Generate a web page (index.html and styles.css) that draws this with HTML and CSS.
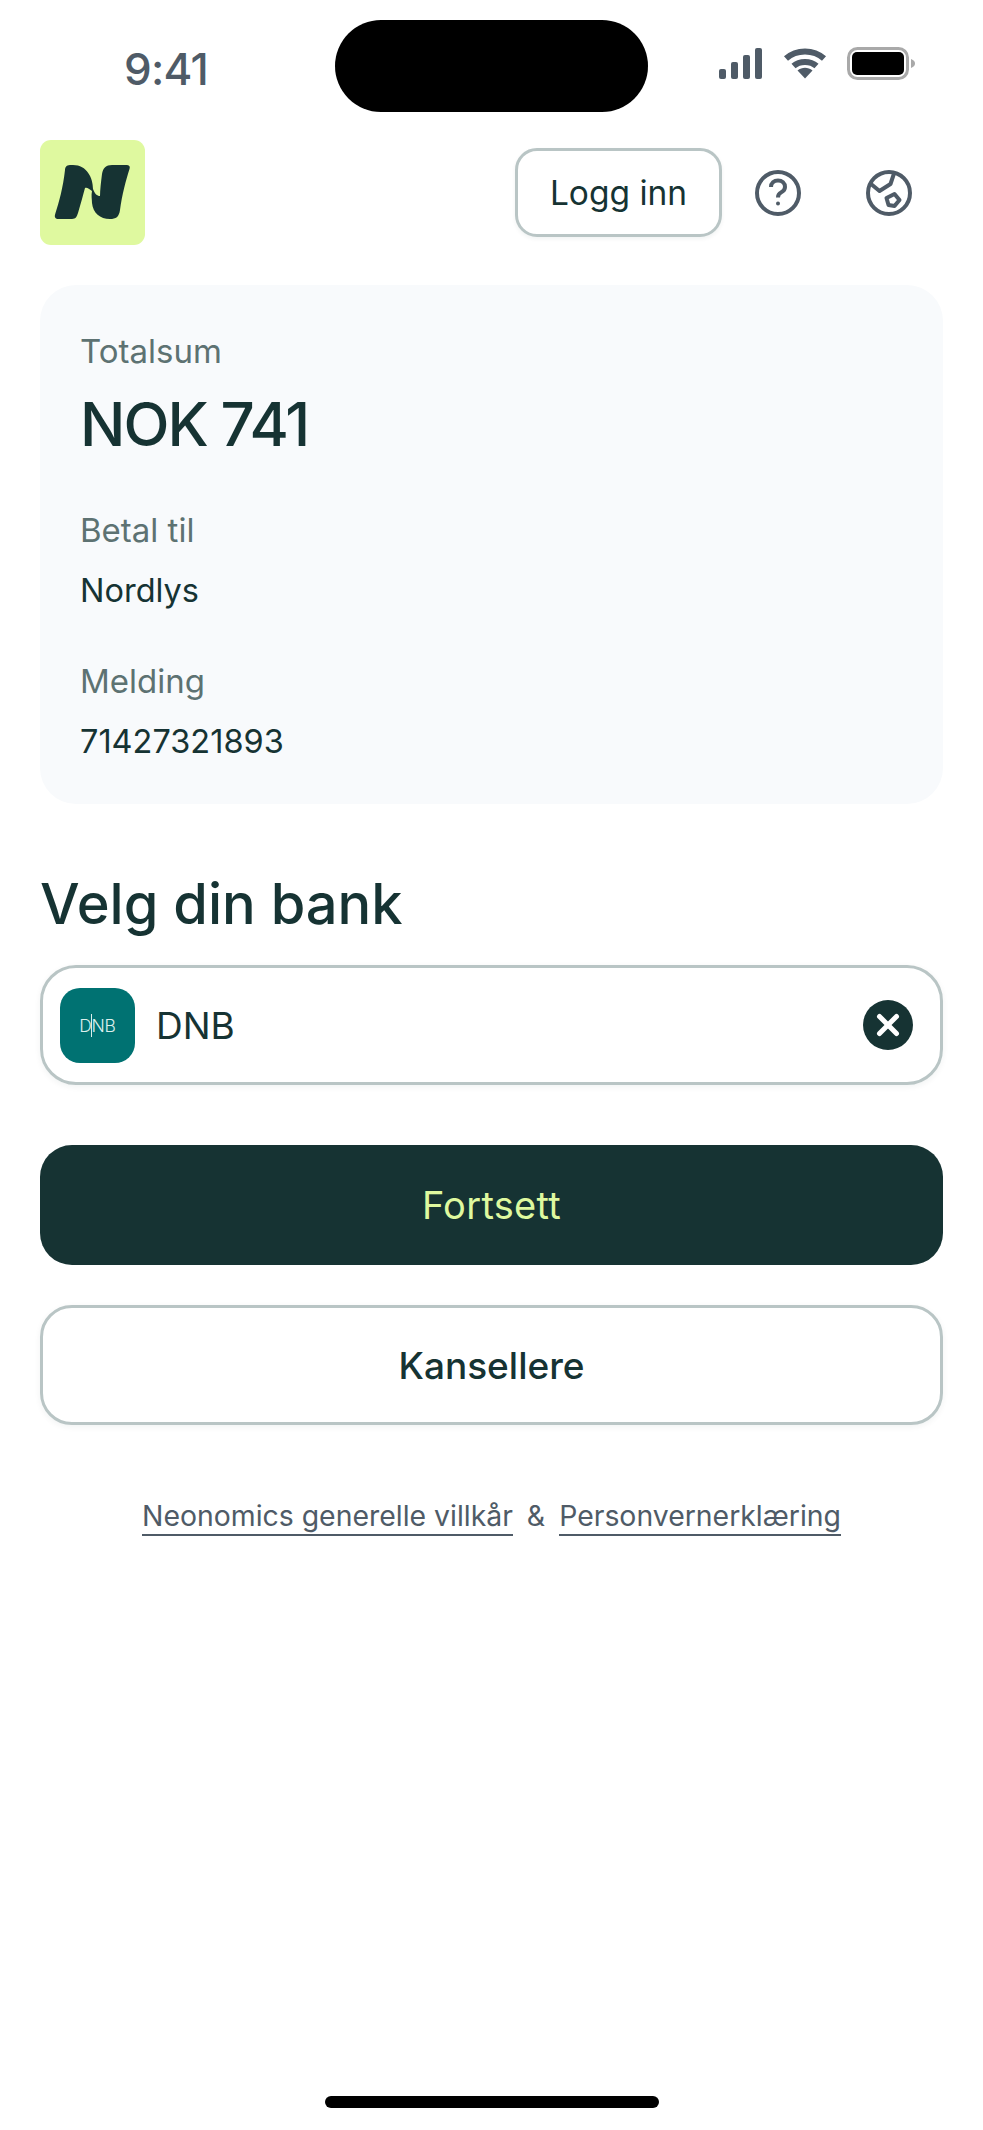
FILE: index.html

```html
<!DOCTYPE html>
<html lang="nb">
<head>
  <meta charset="UTF-8" />
  <title>Neonomics</title>
  <meta name="viewport" content="width=device-width, initial-scale=1.0" />
  <link rel="stylesheet" href="styles.css">
</head>
<body>
  <div class="status-bar">
    <div class="status-time">9:41</div>
    <div class="island"></div>
    <div class="status-icons">
      <svg class="signal" width="45" height="31" viewBox="0 0 45 31">
        <rect x="1" y="21" width="7" height="10" rx="2" />
        <rect x="13" y="14" width="7" height="17" rx="2" />
        <rect x="25" y="7" width="7" height="24" rx="2" />
        <rect x="37" y="0" width="7" height="31" rx="2" />
      </svg>
      <svg class="wifi" width="44" height="31" viewBox="0 0 44 31">
        <path d="M3 10.5C13.5 1 30.500 1 41 10.500M10.500 18C16.500 12.500 27.500 12.500 33.500 18" />
        <path class="wedge" d="M14.500 22.500C19 18.800 25 18.800 29.500 22.500L22 30.500Z" />
      </svg>
      <svg class="battery" width="69" height="33" viewBox="0 0 69 33">
        <rect class="battery-frame" x="1.500" y="1.500" width="59" height="30" rx="9" />
        <rect x="5" y="5" width="52" height="23" rx="5" />
        <path class="battery-nub" d="M64 12C67 13 68 15 68 16.500C68 18 67 20 64 21Z" />
      </svg>
    </div>
  </div>

  <header class="top-bar">
    <svg class="logo" width="105" height="105" viewBox="0 0 105 105">
      <rect width="105" height="105" rx="11" fill="#dff99f" />
      <path fill="#163333" d="M30 25C26 25 25 28 25 30C23 48 19 62 15.500 73C14 77 15 79 19 79L32 79C36 79 37 76 38 73C41 63 43 55 45 48C47 47 49 49 52 51C51 55 52 60 52 63C53 73 60 79 70 79C76 79 79 77 80 70C82 55 86 40 89.500 29C90.500 26 89 25 86 25L72 25C66 25 63 28 62 34C61 42 60 50 60 56C57 56 55 54 53 49C53 38 47 25 33 25Z" />
    </svg>
    <div class="top-actions">
      <button class="login-button">Logg inn</button>
      <svg class="top-icon" width="46" height="46" viewBox="0 0 46 46">
        <circle cx="23" cy="23" r="21" />
        <path d="M16 17C16 13 19 10.500 23 10.500C27 10.500 30 13 30 17C30 20 28 21.500 26 22.500C24 23.500 23 24.500 23 27.500" />
        <circle class="dot" cx="23" cy="33.500" r="2" />
      </svg>
      <svg class="top-icon" width="46" height="46" viewBox="0 0 46 46">
        <circle cx="23" cy="23" r="21" />
        <path d="M5 14L13.500 21L24.500 14L28 3.500" />
        <path d="M20.500 28L28.500 24L33.500 30L28.500 36L22.500 35Z" />
      </svg>
    </div>
  </header>

  <main class="content">
    <section class="summary">
      <div class="summary-label">Totalsum</div>
      <div class="summary-total">NOK 741</div>
      <div class="summary-label">Betal til</div>
      <div class="summary-value">Nordlys</div>
      <div class="summary-label">Melding</div>
      <div class="summary-value">71427321893</div>
    </section>

    <h1>Velg din bank</h1>

    <div class="bank-field">
      <div class="bank-logo"><span class="bank-logo-text">DNB</span></div>
      <div class="bank-name">DNB</div>
      <svg class="bank-clear" width="50" height="50" viewBox="0 0 50 50">
        <circle cx="25" cy="25" r="25" fill="#163333" />
        <path d="M16.500 16.500L33.500 33.500M33.500 16.500L16.500 33.500" />
      </svg>
    </div>

    <button class="button primary">Fortsett</button>
    <button class="button secondary">Kansellere</button>

    <div class="terms">
      <a href="#">Neonomics generelle villkår</a>
      <span>&amp;</span>
      <a href="#">Personvernerklæring</a>
    </div>
  </main>

  <div class="home-indicator"></div>
</body>
</html>
```

FILE: styles.css

```css
:root {
  --ink: #163333;
  --muted: #5d7272;
  --slate: #4f5b67;
  --line: #b9c5c5;
  --lime: #dff99f;
}

* {
  box-sizing: border-box;
}

body {
  margin: 0;
  min-height: 100vh;
  display: flex;
  flex-direction: column;
  background: #ffffff;
  font-family: "Inter", "Liberation Sans", sans-serif;
  color: var(--ink);
}

.status-bar {
  display: flex;
  align-items: center;
  height: 92px;
  margin-top: 20px;
  padding: 0 67px 0 124px;
}

.status-time {
  width: 211px;
  margin-top: 5px;
  font-size: 44px;
  font-weight: 500;
  letter-spacing: -0.800px;
  color: var(--slate);
}

.island {
  width: 313px;
  height: 92px;
  border-radius: 46px;
  background: #000000;
}

.status-icons {
  display: flex;
  align-items: center;
  gap: 20px;
  margin-left: auto;
  margin-top: -5px;
}

.signal rect {
  fill: var(--slate);
}

.wifi path {
  fill: none;
  stroke: var(--slate);
  stroke-width: 6;
}

.wifi .wedge {
  fill: var(--slate);
  stroke: none;
}

.battery-frame {
  fill: #ffffff;
  stroke: #a9a9a9;
  stroke-width: 3;
}

.battery-nub {
  fill: #a9a9a9;
}

.top-bar {
  display: flex;
  align-items: center;
  justify-content: space-between;
  margin-top: 28px;
  padding: 0 71px 0 40px;
}

.top-actions {
  display: flex;
  align-items: center;
  gap: 65px;
}

.login-button {
  width: 207px;
  height: 89px;
  margin-right: -32px;
  border: 3px solid var(--line);
  border-radius: 22px;
  background: #ffffff;
  font-family: inherit;
  font-size: 33.500px;
  color: var(--ink);
  box-shadow: 0 2px 4px rgba(22, 51, 51, 0.06);
}

.top-icon circle,
.top-icon path {
  fill: none;
  stroke: var(--slate);
  stroke-width: 4;
  stroke-linejoin: round;
}

.top-icon .dot {
  fill: var(--slate);
  stroke: none;
}

.content {
  display: flex;
  flex-direction: column;
  padding: 0 40px;
}

.summary {
  margin-top: 40px;
  height: 519px;
  padding: 46px 40px 0;
  border-radius: 36px;
  background: #f8fafc;
}

.summary-label {
  font-size: 33px;
  line-height: 40px;
  color: var(--muted);
}

.summary-total {
  margin: 17px 0 50px;
  font-size: 60px;
  line-height: 72px;
  font-weight: 450;
  letter-spacing: -2px;
}

.summary-value {
  margin: 21px 0 50px;
  font-size: 32.500px;
  line-height: 40px;
}

h1 {
  margin: 66px 0 0;
  font-size: 56px;
  line-height: 68px;
  font-weight: 450;
}

.bank-field {
  display: flex;
  align-items: center;
  height: 120px;
  margin-top: 27px;
  padding: 0 27px 0 17px;
  border: 3px solid var(--line);
  border-radius: 36px;
  box-shadow: 0 2px 6px rgba(22, 51, 51, 0.06);
}

.bank-logo {
  display: flex;
  align-items: center;
  justify-content: center;
  width: 75px;
  height: 75px;
  border-radius: 20px;
  background: #007272;
}

.bank-logo-text {
  position: relative;
  font-size: 17.500px;
  font-weight: 300;
  letter-spacing: -0.300px;
  color: #dcefec;
}

/* the thin stroke that runs through the N */
.bank-logo-text::after {
  content: "";
  position: absolute;
  left: 12px;
  top: -1px;
  width: 1px;
  height: 23px;
  background: #dcefec;
}

.bank-name {
  margin-left: 21px;
  font-size: 37px;
}

.bank-clear {
  margin-left: auto;
}

.bank-clear path {
  fill: none;
  stroke: #ffffff;
  stroke-width: 5;
  stroke-linecap: round;
}

.button {
  height: 120px;
  border-radius: 32px;
  font-family: inherit;
}

.primary {
  margin-top: 60px;
  border: none;
  background: var(--ink);
  color: var(--lime);
  font-size: 38px;
  letter-spacing: 0.3px;
}

.secondary {
  margin-top: 40px;
  border: 3px solid var(--line);
  background: #ffffff;
  color: var(--ink);
  font-size: 37px;
  font-weight: 450;
  box-shadow: 0 2px 6px rgba(22, 51, 51, 0.06);
}

.terms {
  display: flex;
  justify-content: center;
  gap: 14px;
  margin-top: 72px;
  font-size: 28.400px;
  line-height: 37px;
  color: var(--slate);
}

.terms a {
  color: inherit;
  text-decoration: none;
  border-bottom: 2px solid var(--slate);
}

.home-indicator {
  width: 334px;
  height: 12px;
  margin: auto auto 22px;
  border-radius: 6px;
  background: #000000;
}
```
